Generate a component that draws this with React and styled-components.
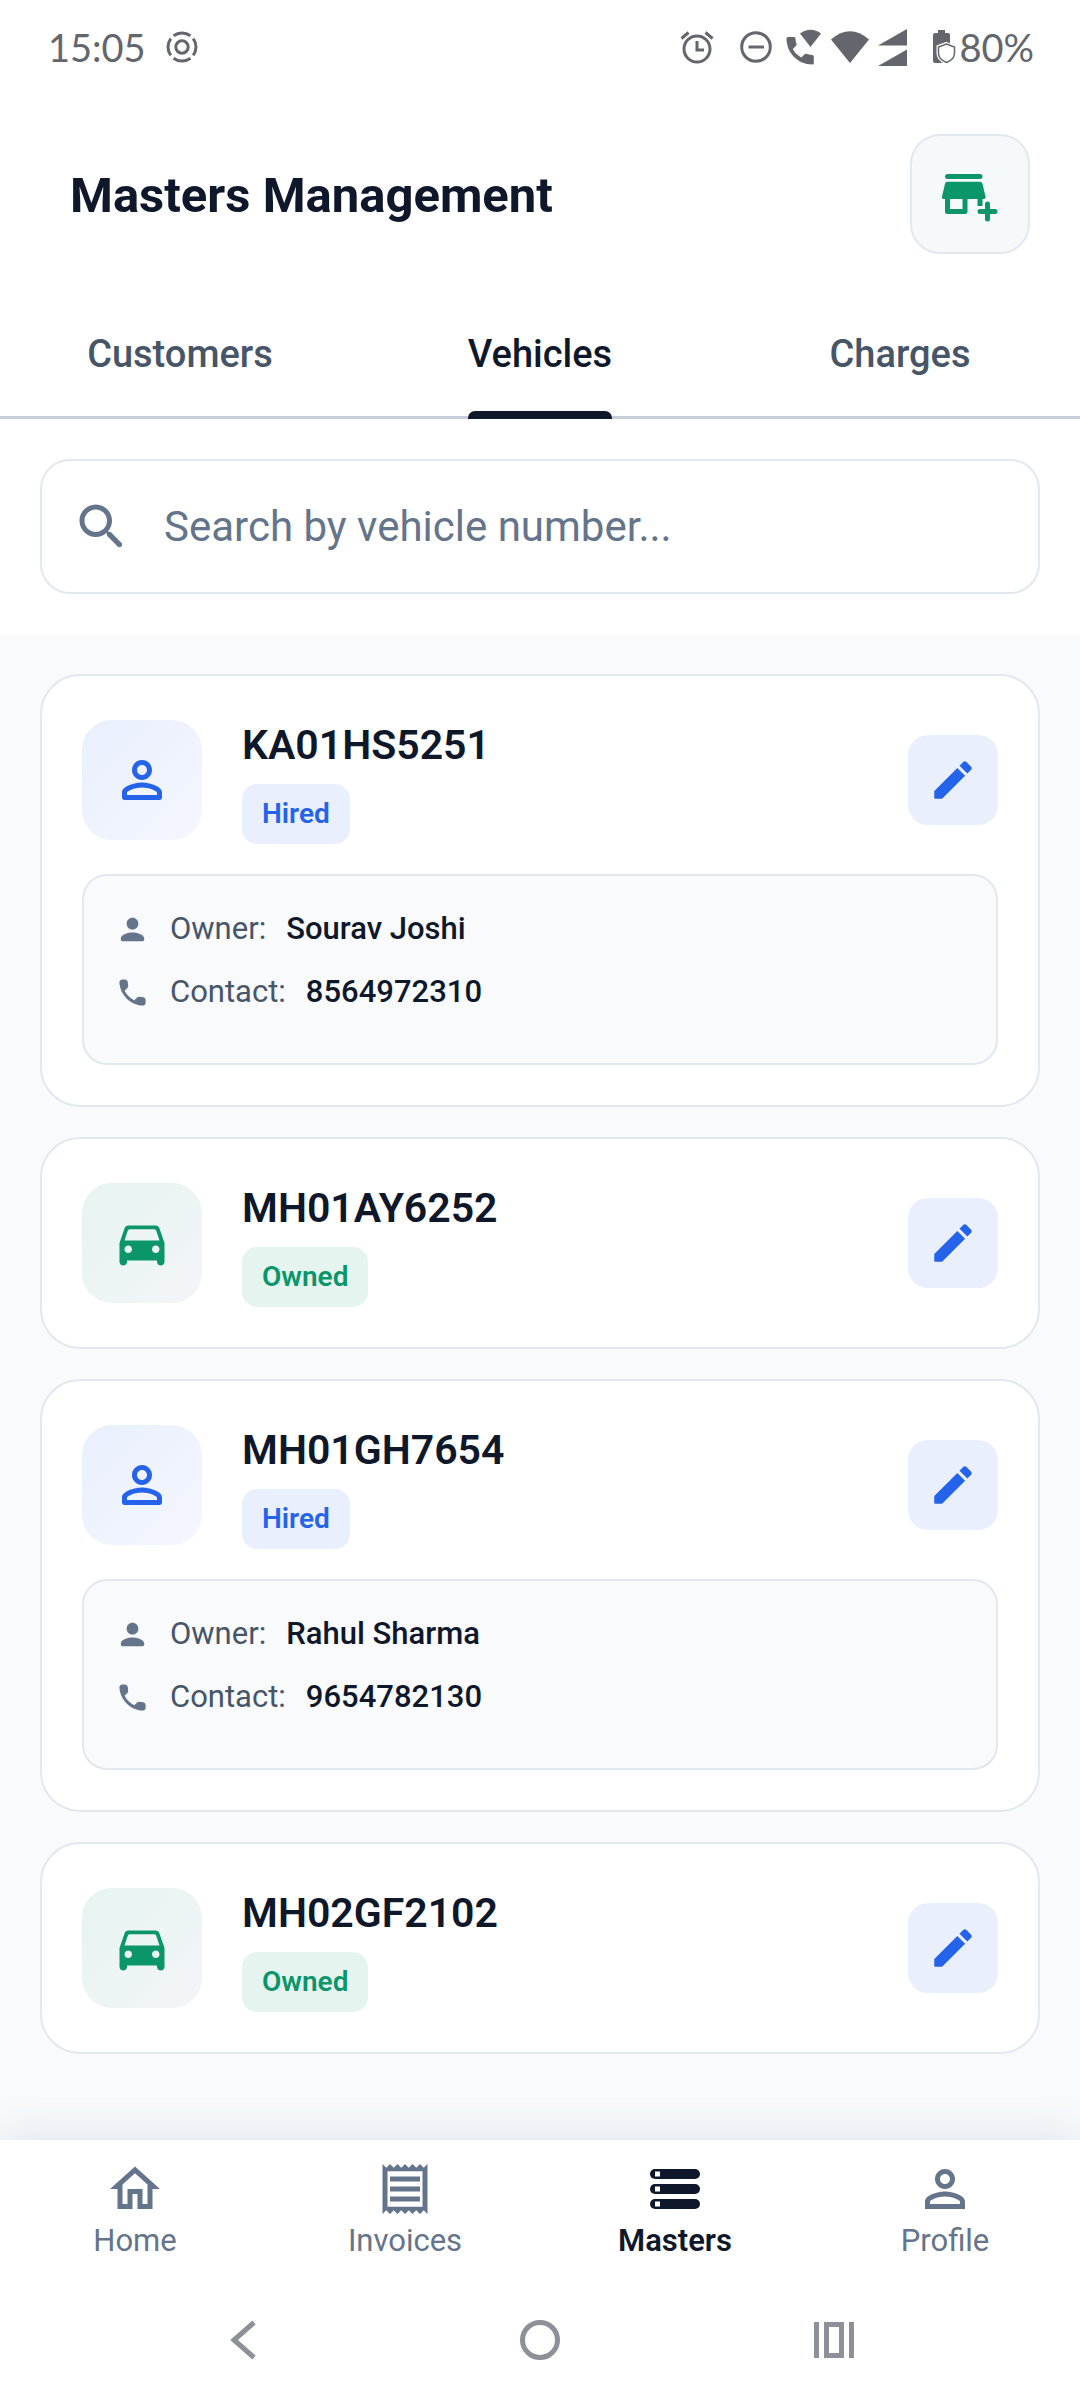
import React, { useState } from 'react';
import styled, { createGlobalStyle } from 'styled-components';


const GlobalStyle = createGlobalStyle`
  * {
    box-sizing: border-box;
  }

  body {
    margin: 0;
    background-color: #ffffff;
    font-family: Roboto, 'Liberation Sans', sans-serif;
    color: #0f172a;
  }

  h1, h2, p, ul, dl, dd {
    margin: 0;
    padding: 0;
  }

  button {
    margin: 0;
    padding: 0;
    border: none;
    background: none;
    font-family: inherit;
    cursor: pointer;
  }
`

const Screen = styled.div`
  display: flex;
  flex-direction: column;
  min-height: 100vh;
`

const StatusBar = styled.div`
  display: flex;
  align-items: center;
  justify-content: space-between;
  height: 94px;
  padding: 0 46px 0 48px;
  color: #63666c;
  font-family: Lato, sans-serif;
  font-size: 38px;
  line-height: 44px;
`

const StatusGroup = styled.div`
  display: flex;
  align-items: center;
  gap: ${props => props.$gap}px;
`

const Header = styled.header`
  display: flex;
  align-items: center;
  justify-content: space-between;
  padding: 40px 50px 40px 70px;
`

const Title = styled.h1`
  padding-top: 3px;
  font-size: 49px;
  line-height: 60px;
  font-weight: 700;
`

const AddButton = styled.button`
  display: flex;
  align-items: center;
  justify-content: center;
  width: 120px;
  height: 120px;
  border: 2px solid #e2e8f0;
  border-radius: 30px;
  background-color: #f5f9fa;
  color: #0b966a;
`

const Tabs = styled.div`
  display: grid;
  grid-template-columns: repeat(3, 1fr);
  box-shadow: inset 0 -3px 0 #c9ccd9;
`

const Tab = styled.button`
  display: flex;
  justify-content: center;
  color: ${props => props.$active ? '#0f172a' : '#475569'};
  font-size: 38px;
  line-height: 121px;
  font-weight: 500;
`

const TabLabel = styled.span`
  position: relative;
  padding-bottom: 4px;

  &::after {
    content: '';
    position: absolute;
    left: 0;
    right: 0;
    bottom: 0;
    height: 8px;
    border-radius: 7px 7px 0 0;
    background-color: ${props => props.$active ? '#0f172a' : 'transparent'};
  }
`

const SearchSection = styled.div`
  padding: 40px;
`

const SearchBox = styled.label`
  display: flex;
  align-items: center;
  gap: 32px;
  height: 135px;
  padding: 0 30px;
  border: 2px solid #e2e8f0;
  border-radius: 30px;
  color: #64748b;
`

const SearchInput = styled.input`
  flex: 1;
  min-width: 0;
  padding: 0;
  border: none;
  outline: none;
  background: none;
  color: #0f172a;
  font-family: inherit;
  font-size: 42px;
  line-height: 60px;

  &::placeholder {
    color: #64748b;
    opacity: 1;
  }
`

const VehicleList = styled.ul`
  display: flex;
  flex: 1;
  flex-direction: column;
  gap: 30px;
  padding: 40px;
  background-color: #f8fafc;
  list-style: none;
`

const Card = styled.li`
  padding: 40px;
  border: 2px solid #e2e8f0;
  border-radius: 40px;
  background-color: #ffffff;
`

const CardTop = styled.div`
  display: flex;
  align-items: center;
  gap: 40px;
`

const TypeIcon = styled.div`
  display: flex;
  align-items: center;
  justify-content: center;
  width: 120px;
  height: 120px;
  border-radius: 30px;
  color: ${props => props.$hired ? '#2563eb' : '#0b966a'};
  background: ${props => props.$hired
    ? 'linear-gradient(135deg, #e9effd, #f4f7ff)'
    : 'linear-gradient(135deg, #e6f4f0, #f3f5f9)'};
`

const VehicleInfo = styled.div`
  flex: 1;
`

const VehicleNumber = styled.h2`
  font-size: 41px;
  line-height: 58px;
  font-weight: 600;
`

const Badge = styled.p`
  width: fit-content;
  margin-top: 10px;
  padding: 0 20px;
  border-radius: 15px;
  font-size: 28px;
  line-height: 60px;
  font-weight: 600;
  color: ${props => props.$hired ? '#2563eb' : '#0b966a'};
  background-color: ${props => props.$hired ? '#e9effd' : '#e6f4f0'};
`

const EditButton = styled.button`
  display: flex;
  align-items: center;
  justify-content: center;
  width: 90px;
  height: 90px;
  border-radius: 20px;
  background-color: #e9effd;
  color: #2563eb;
`

const OwnerBox = styled.dl`
  display: flex;
  flex-direction: column;
  gap: 19px;
  margin-top: 30px;
  padding: 31px 31px 49px;
  border: 2px solid #e2e8f0;
  border-radius: 25px;
  background-color: #f8fafc;
`

const OwnerRow = styled.div`
  display: flex;
  align-items: center;
  gap: 20px;
  font-size: 31px;
  line-height: 44px;

  svg {
    color: #64748b;
  }

  dt {
    color: #475569;
  }

  dd {
    font-weight: 500;
  }
`

const BottomNav = styled.nav`
  position: relative;
  display: grid;
  grid-template-columns: repeat(4, 1fr);
  padding: 19px 0 17px;
  background-color: #ffffff;
  box-shadow: 0 -5px 40px rgba(51, 85, 119, 0.12);
`

const NavItem = styled.a`
  display: flex;
  flex-direction: column;
  align-items: center;
  color: ${props => props.$active ? '#0f172a' : '#64748b'};
  font-size: 31px;
  line-height: 44px;
  font-weight: ${props => props.$active ? 600 : 400};
  text-decoration: none;
`

const SystemNav = styled.div`
  position: relative;
  display: flex;
  align-items: center;
  justify-content: space-between;
  height: 120px;
  padding: 0 20%;
  background-color: #ffffff;
  color: #8c9098;
`

const SystemButton = styled.button`
  display: flex;
  align-items: center;
  justify-content: center;
  width: 60px;
  height: 60px;
  color: inherit;
`


const Icon = ({ size = 60, children }) => (
    <svg width={size} height={size} viewBox="0 0 24 24" fill="currentColor" aria-hidden="true">
        {children}
    </svg>
);

const HotspotIcon = () => (
    <svg width="32" height="32" viewBox="0 0 32 32" fill="none" stroke="currentColor" strokeWidth="3" aria-hidden="true">
        <circle cx="16" cy="16" r="6.2" />
        <circle cx="16" cy="16" r="14" pathLength="360" strokeDasharray="74 16" strokeDashoffset="37" />
    </svg>
);

const AlarmIcon = () => (
    <svg width="34" height="34" viewBox="0 0 34 34" fill="none" stroke="currentColor" strokeWidth="3" aria-hidden="true">
        <circle cx="17" cy="19" r="13" />
        <path d="M17 11v9h7M1.500 8.500l7-6M32.500 8.500l-7-6" />
    </svg>
);

const DoNotDisturbIcon = () => (
    <svg width="32" height="32" viewBox="0 0 32 32" fill="none" stroke="currentColor" strokeWidth="3" aria-hidden="true">
        <circle cx="16" cy="16" r="14.300" />
        <path d="M8.500 16h15.500" />
    </svg>
);

const WifiCallIcon = () => (
    <svg width="36" height="36" viewBox="0 0 36 36" fill="currentColor" aria-hidden="true">
        <path d="M14 4.500Q24.500-3 35 4.500L24.500 18z" />
        <path d="M2 8h6q1.500 0 1.500 1.500 0 3 1 5.500.300 1-.400 1.700l-3.300 3.300q3 5.500 8.500 8.500l3.300-3.300q.700-.700 1.700-.400 2.500 1 6 1.200 1.500 0 1.500 1.500V34q0 1.500-1.500 1.500C12 35.500.500 24 .500 9.500Q.500 8 2 8z" />
    </svg>
);

const WifiIcon = () => (
    <svg width="38" height="32" viewBox="0 0 38 32" fill="currentColor" aria-hidden="true">
        <path d="M0 8.500Q19-8 38 8.500L19 32z" />
    </svg>
);

const SignalIcon = () => (
    <svg width="29" height="37" viewBox="0 0 29 37" fill="currentColor" aria-hidden="true">
        <path d="M0 16.500L29 0v16.500zM0 37l29-16.500V37z" />
    </svg>
);

const BatteryIcon = () => (
    <svg width="23" height="34" viewBox="0 0 23 34" aria-hidden="true">
        <path fill="currentColor" d="M5 0h7v3h3q2 0 2 2v26q0 2-2 2H2q-2 0-2-2V5q0-2 2-2h3z" />
        <path fill="#ffffff" stroke="#ffffff" strokeWidth="4" d="M13.500 14l8 3v6q0 6.500-8 9.500-8-3-8-9.500v-6z" />
        <path fill="#ffffff" stroke="currentColor" strokeWidth="1.500" d="M13.500 14l8 3v6q0 6.500-8 9.500-8-3-8-9.500v-6z" />
    </svg>
);

const AddBusinessIcon = () => (
    <Icon>
        <rect x="2" y="4" width="15" height="2" rx="1" />
        <path fillRule="evenodd" d="M3 7.100h13q.800 0 1 .800l1.200 5.100q.200 1-.700 1H17v2.800h-2V14h-4v5q0 1-1 1H3q-1 0-1-1v-5h-.500q-.900 0-.700-1L2 7.900q.200-.800 1-.800zM4 14v4h5v-4z" />
        <path d="M18 16q0-1 1-1t1 1v2h2q1 0 1 1t-1 1h-2v2q0 1-1 1t-1-1v-2h-2q-1 0-1-1t1-1h2z" />
    </Icon>
);

const SearchIcon = () => (
    <Icon>
        <path d="M15.500 14h-.790l-.280-.270C15.410 12.590 16 11.110 16 9.500 16 5.910 13.090 3 9.500 3S3 5.910 3 9.500 5.910 16 9.500 16c1.610 0 3.090-.590 4.230-1.570l.270.280v.790l4.250 4.250c.410.410 1.080.410 1.490 0s.410-1.080 0-1.490L15.500 14zm-6 0C7.010 14 5 11.990 5 9.500S7.010 5 9.500 5 14 7.010 14 9.500 11.990 14 9.500 14z" />
    </Icon>
);

const PersonOutlineIcon = ({ rounded }) => (
    <Icon>
        <path d="M12 6c1.100 0 2 .900 2 2s-.900 2-2 2-2-.900-2-2 .900-2 2-2m0-2C9.790 4 8 5.790 8 8s1.790 4 4 4 4-1.790 4-4-1.790-4-4-4z" />
        {rounded
            ? <path d="M12 15c2.700 0 5.800 1.290 6 2v1H6v-.990c.200-.720 3.300-2.010 6-2.010m0-2c-2.670 0-8 1.340-8 4v2c0 .550.450 1 1 1h14c.550 0 1-.450 1-1v-2c0-2.660-5.330-4-8-4z" />
            : <path d="M12 15c2.700 0 5.800 1.290 6 2v1H6v-.990c.200-.720 3.300-2.010 6-2.010m0-2c-2.670 0-8 1.340-8 4v3h16v-3c0-2.660-5.330-4-8-4z" />}
    </Icon>
);

const CarIcon = () => (
    <Icon>
        <path d="M18.920 6.010C18.720 5.420 18.160 5 17.500 5h-11c-.660 0-1.210.420-1.420 1.010L3 12v7.500c0 .820.670 1.500 1.500 1.500S6 20.320 6 19.500V19h12v.500c0 .820.670 1.500 1.500 1.500s1.500-.680 1.500-1.500V12l-2.080-5.990zM6.500 16c-.830 0-1.500-.670-1.500-1.500S5.670 13 6.500 13s1.500.670 1.500 1.500S7.330 16 6.500 16zm11 0c-.830 0-1.500-.670-1.500-1.500s.670-1.500 1.500-1.500 1.500.670 1.500 1.500-.670 1.500-1.500 1.500zM5 11l1.270-3.820c.140-.400.520-.680.950-.680h9.560c.430 0 .810.280.950.680L19 11H5z" />
    </Icon>
);

const EditIcon = () => (
    <Icon size={50}>
        <path d="M3 17.460v3.040c0 .280.220.500.500.500h3.040c.130 0 .260-.050.350-.150L17.810 9.940l-3.750-3.750L3.150 17.100c-.100.100-.150.220-.150.360zM20.710 7.040c.390-.390.390-1.020 0-1.410l-2.340-2.340c-.390-.390-1.020-.390-1.410 0l-1.830 1.830 3.750 3.750 1.830-1.830z" />
    </Icon>
);

const PersonIcon = () => (
    <Icon size={35}>
        <path d="M12 12c2.210 0 4-1.790 4-4s-1.790-4-4-4-4 1.790-4 4 1.790 4 4 4zm0 2c-2.670 0-8 1.340-8 4v1c0 .550.450 1 1 1h14c.550 0 1-.450 1-1v-1c0-2.660-5.330-4-8-4z" />
    </Icon>
);

const PhoneIcon = () => (
    <Icon size={35}>
        <path d="M19.230 15.260l-2.540-.290c-.610-.070-1.210.140-1.640.570l-1.840 1.840c-2.830-1.440-5.150-3.750-6.590-6.590l1.850-1.850c.430-.430.640-1.030.570-1.640l-.290-2.520c-.120-1.010-.970-1.770-1.990-1.770H5.030c-1.130 0-2.070.940-2 2.070.530 8.540 7.360 15.360 15.890 15.890 1.130.070 2.070-.870 2.070-2v-1.730c.010-1.010-.750-1.860-1.760-1.980z" />
    </Icon>
);

const HomeIcon = () => (
    <Icon>
        <path d="M12 5.690l5 4.500V18h-2v-6H9v6H7v-7.810l5-4.500M12 3L2 12h3v8h6v-6h2v6h6v-8h3L12 3z" />
    </Icon>
);

const ReceiptIcon = () => (
    <Icon>
        <path d="M19.500 3.500L18 2l-1.500 1.500L15 2l-1.500 1.500L12 2l-1.500 1.500L9 2 7.500 3.500 6 2 4.500 3.500 3 2v20l1.500-1.500L6 22l1.500-1.500L9 22l1.500-1.500L12 22l1.500-1.500L15 22l1.500-1.500L18 22l1.500-1.500L21 22V2l-1.500 1.500zM19 19.090H5V4.910h14v14.180zM6 15h12v2H6zm0-4h12v2H6zm0-4h12v2H6z" />
    </Icon>
);

const StorageIcon = () => (
    <Icon>
        {[4, 10, 16].map(y => (
            <React.Fragment key={y}>
                <rect x="2" y={y} width="20" height="4" rx="2" />
                <rect x="4" y={y + 1} width="2" height="2" fill="#ffffff" />
            </React.Fragment>
        ))}
    </Icon>
);


const tabs = ['Customers', 'Vehicles', 'Charges'];

const vehicles = [
    { number: 'KA01HS5251', type: 'Hired', owner: 'Sourav Joshi', contact: '8564972310' },
    { number: 'MH01AY6252', type: 'Owned' },
    { number: 'MH01GH7654', type: 'Hired', owner: 'Rahul Sharma', contact: '9654782130' },
    { number: 'MH02GF2102', type: 'Owned' },
];

const navItems = [
    { label: 'Home', icon: <HomeIcon /> },
    { label: 'Invoices', icon: <ReceiptIcon /> },
    { label: 'Masters', icon: <StorageIcon /> },
    { label: 'Profile', icon: <PersonOutlineIcon /> },
];

const VehicleCard = ({ vehicle }) => {
    const hired = vehicle.type === 'Hired';

    return (
        <Card>
            <CardTop>
                <TypeIcon $hired={hired}>
                    {hired ? <PersonOutlineIcon rounded /> : <CarIcon />}
                </TypeIcon>
                <VehicleInfo>
                    <VehicleNumber>{vehicle.number}</VehicleNumber>
                    <Badge $hired={hired}>{vehicle.type}</Badge>
                </VehicleInfo>
                <EditButton aria-label={`Edit ${vehicle.number}`}>
                    <EditIcon />
                </EditButton>
            </CardTop>
            {hired && (
                <OwnerBox>
                    <OwnerRow>
                        <PersonIcon />
                        <dt>Owner:</dt>
                        <dd>{vehicle.owner}</dd>
                    </OwnerRow>
                    <OwnerRow>
                        <PhoneIcon />
                        <dt>Contact:</dt>
                        <dd>{vehicle.contact}</dd>
                    </OwnerRow>
                </OwnerBox>
            )}
        </Card>
    );
};

const App = () => {
    const [activeTab, setActiveTab] = useState('Vehicles');
    const [search, setSearch] = useState('');

    const visible = vehicles.filter(v => v.number.toLowerCase().includes(search.toLowerCase()));

    return (
        <Screen>
            <GlobalStyle />
            <StatusBar>
                <StatusGroup $gap={20}>
                    <span>15:05</span>
                    <HotspotIcon />
                </StatusGroup>
                <StatusGroup $gap={3}>
                    <StatusGroup $gap={26}>
                        <AlarmIcon />
                        <StatusGroup $gap={14}>
                            <DoNotDisturbIcon />
                            <StatusGroup $gap={9}>
                                <WifiCallIcon />
                                <WifiIcon />
                                <SignalIcon />
                            </StatusGroup>
                        </StatusGroup>
                        <BatteryIcon />
                    </StatusGroup>
                    <span>80%</span>
                </StatusGroup>
            </StatusBar>

            <Header>
                <Title>Masters Management</Title>
                <AddButton aria-label="Add business">
                    <AddBusinessIcon />
                </AddButton>
            </Header>

            <Tabs role="tablist">
                {tabs.map(tab => (
                    <Tab
                        key={tab}
                        role="tab"
                        aria-selected={activeTab === tab}
                        $active={activeTab === tab}
                        onClick={() => setActiveTab(tab)}
                    >
                        <TabLabel $active={activeTab === tab}>{tab}</TabLabel>
                    </Tab>
                ))}
            </Tabs>

            <SearchSection>
                <SearchBox>
                    <SearchIcon />
                    <SearchInput
                        type="text"
                        aria-label="Search by vehicle number"
                        placeholder="Search by vehicle number..."
                        value={search}
                        onChange={e => setSearch(e.target.value)}
                    />
                </SearchBox>
            </SearchSection>

            <VehicleList>
                {visible.map(vehicle => (
                    <VehicleCard key={vehicle.number} vehicle={vehicle} />
                ))}
            </VehicleList>

            <BottomNav>
                {navItems.map(item => (
                    <NavItem key={item.label} href="#" $active={item.label === 'Masters'}>
                        {item.icon}
                        {item.label}
                    </NavItem>
                ))}
            </BottomNav>

            <SystemNav>
                <SystemButton aria-label="Back">
                    <svg width="40" height="40" viewBox="0 0 40 40" fill="none" stroke="currentColor" strokeWidth="5" aria-hidden="true">
                        <path d="M28 2.500L8 20l20 17.500" />
                    </svg>
                </SystemButton>
                <SystemButton aria-label="Home screen">
                    <svg width="40" height="40" viewBox="0 0 40 40" fill="none" stroke="currentColor" strokeWidth="5" aria-hidden="true">
                        <circle cx="20" cy="20" r="17.500" />
                    </svg>
                </SystemButton>
                <SystemButton aria-label="Recent apps">
                    <svg width="40" height="40" viewBox="0 0 40 40" fill="none" stroke="currentColor" strokeWidth="5" aria-hidden="true">
                        <path d="M2.500 2v36M37.500 2v36M12.500 4.500h15v31h-15z" />
                    </svg>
                </SystemButton>
            </SystemNav>
        </Screen>
    );
};

export default App;
